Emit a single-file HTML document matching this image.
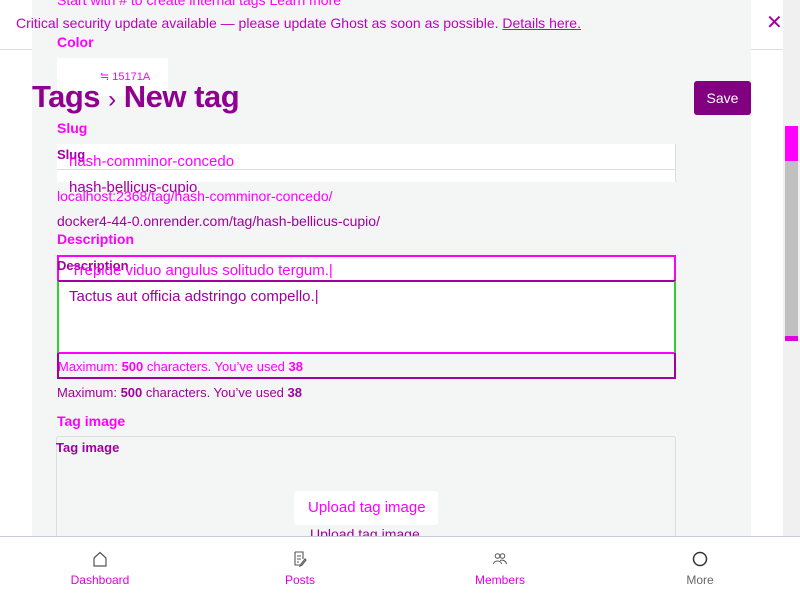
<!DOCTYPE html>
<html><head><meta charset="utf-8"><style>
*{margin:0;padding:0;box-sizing:border-box}
body{width:800px;height:600px;overflow:hidden;background:#fff;font-family:"Liberation Sans",sans-serif;position:relative}
.a{position:absolute;white-space:nowrap}
.m{color:#f0f}
.p{color:#a000a0}
</style></head><body>
<div class="a" style="left:0;top:49px;width:783px;height:1px;background:#ddd"></div>
<div class="a" style="left:32px;top:0;width:719px;height:537px;background:#f4f5f5"></div>
<div class="a m" style="left:57px;top:-8px;font-size:14px">Start with # to create internal tags Learn more</div>
<div class="a" style="left:16px;top:15px;font-size:14px;color:#c000c0">Critical security update available — please update Ghost as soon as possible. <span style="text-decoration:underline">Details here.</span></div>
<div class="a" style="left:766px;top:10px;font-size:20px;color:#a000a0">✕</div>
<div class="a m" style="left:57px;top:34px;font-size:14px;font-weight:bold">Color</div>
<div class="a" style="left:57px;top:58px;width:111px;height:38px;background:#fff"></div>
<div class="a m" style="left:100px;top:70px;font-size:11px">≒ 15171A</div>
<div class="a" style="left:32px;top:79px;font-size:31px;font-weight:bold;color:#900090;letter-spacing:-0.5px">Tags <span style="font-weight:normal;font-size:24px">›</span> New tag</div>
<div class="a" style="left:694px;top:81px;width:57px;height:34px;background:#800080;border-radius:3px;color:#fff;font-size:14px;text-align:center;line-height:34px">Save</div>
<div class="a m" style="left:57px;top:120px;font-size:14px;font-weight:bold">Slug</div>
<div class="a" style="left:57px;top:144px;width:619px;height:38px;background:#fff;border-right:1px solid #ddd"></div>
<div class="a" style="left:57px;top:169px;width:618px;height:1px;background:#ddd"></div>
<div class="a p" style="left:57px;top:147px;font-size:13px;font-weight:bold">Slug</div>
<div class="a m" style="left:69px;top:153px;font-size:15px">hash-comminor-concedo</div>
<div class="a p" style="left:69px;top:179px;font-size:15px">hash-bellicus-cupio</div>
<div class="a m" style="left:57px;top:188px;font-size:14px">localhost:2368/tag/hash-comminor-concedo/</div>
<div class="a p" style="left:57px;top:213px;font-size:14px">docker4-44-0.onrender.com/tag/hash-bellicus-cupio/</div>
<div class="a m" style="left:57px;top:231px;font-size:14px;font-weight:bold">Description</div>
<div class="a" style="left:57px;top:255px;width:619px;height:26px;background:#fff;border:2px solid #f0f;border-bottom:none"></div>
<div class="a" style="left:57px;top:280px;width:619px;height:74px;background:#fff;border-top:2px solid #a000a0;border-left:2px solid #3c3;border-right:2px solid #3c3;border-bottom:2px solid #f0f"></div>
<div class="a" style="left:57px;top:353px;width:619px;height:26px;border:2px solid #a000a0;border-top:none"></div>
<div class="a p" style="left:57px;top:258px;font-size:13px;font-weight:bold">Description</div>
<div class="a m" style="left:71px;top:262px;font-size:15px">Trepide viduo angulus solitudo tergum.|</div>
<div class="a p" style="left:69px;top:288px;font-size:15px">Tactus aut officia adstringo compello.|</div>
<div class="a m" style="left:58px;top:359px;font-size:13px">Maximum: <b>500</b> characters. You’ve used <b>38</b></div>
<div class="a p" style="left:57px;top:385px;font-size:13px">Maximum: <b>500</b> characters. You’ve used <b>38</b></div>
<div class="a m" style="left:57px;top:413px;font-size:14px;font-weight:bold">Tag image</div>
<div class="a" style="left:56px;top:436px;width:620px;height:110px;border:1px solid #ddd;border-radius:3px"></div>
<div class="a p" style="left:56px;top:440px;font-size:13px;font-weight:bold">Tag image</div>
<div class="a" style="left:294px;top:491px;width:144px;height:34px;background:#fff;border-radius:3px"></div>
<div class="a m" style="left:308px;top:499px;font-size:15px">Upload tag image</div>
<div class="a p" style="left:310px;top:526px;font-size:14px">Upload tag image</div>
<div class="a" style="left:783px;top:0;width:17px;height:537px;background:#f0f0f0"></div>
<div class="a" style="left:785px;top:126px;width:13px;height:35px;background:#f0f"></div>
<div class="a" style="left:785px;top:161px;width:13px;height:175px;background:#c0c0c0"></div>
<div class="a" style="left:785px;top:336px;width:13px;height:5px;background:#e000e0"></div>
<div class="a" style="left:0;top:536px;width:800px;height:64px;background:#fff;border-top:1px solid #ccd"></div>
<svg class="a" style="left:92px;top:551px" width="16" height="16" viewBox="0 0 16 16"><path d="M2 7L8 1.5 14 7V15H2Z" fill="none" stroke="#555" stroke-width="1.2"/></svg>
<svg class="a" style="left:292px;top:551px" width="16" height="16" viewBox="0 0 16 16"><path d="M3 1H11V8M3 1V14H8M5 5H9M5 8H9M5 11H7M13 8L9 13 8 15 10 14 14 9Z" fill="none" stroke="#555" stroke-width="1.1"/></svg>
<svg class="a" style="left:492px;top:552px" width="16" height="14" viewBox="0 0 16 14"><circle cx="5.5" cy="4" r="2.3" fill="none" stroke="#555"/><circle cx="10.5" cy="4" r="2.3" fill="none" stroke="#555"/><path d="M1.5 12C2 8 9 8 9.5 12M8 8.5C11 7.5 14 9 14.5 12" fill="none" stroke="#555"/></svg>
<svg class="a" style="left:692px;top:551px" width="16" height="16" viewBox="0 0 16 16"><circle cx="8" cy="8" r="6.5" fill="none" stroke="#333" stroke-width="1.5"/></svg>
<div class="a m" style="left:70px;top:573px;width:60px;text-align:center;font-size:12px;color:#e000e0">Dashboard</div>
<div class="a m" style="left:270px;top:573px;width:60px;text-align:center;font-size:12px;color:#e000e0">Posts</div>
<div class="a m" style="left:470px;top:573px;width:60px;text-align:center;font-size:12px;color:#e000e0">Members</div>
<div class="a" style="left:670px;top:573px;width:60px;text-align:center;font-size:12px;color:#666">More</div>
</body></html>
